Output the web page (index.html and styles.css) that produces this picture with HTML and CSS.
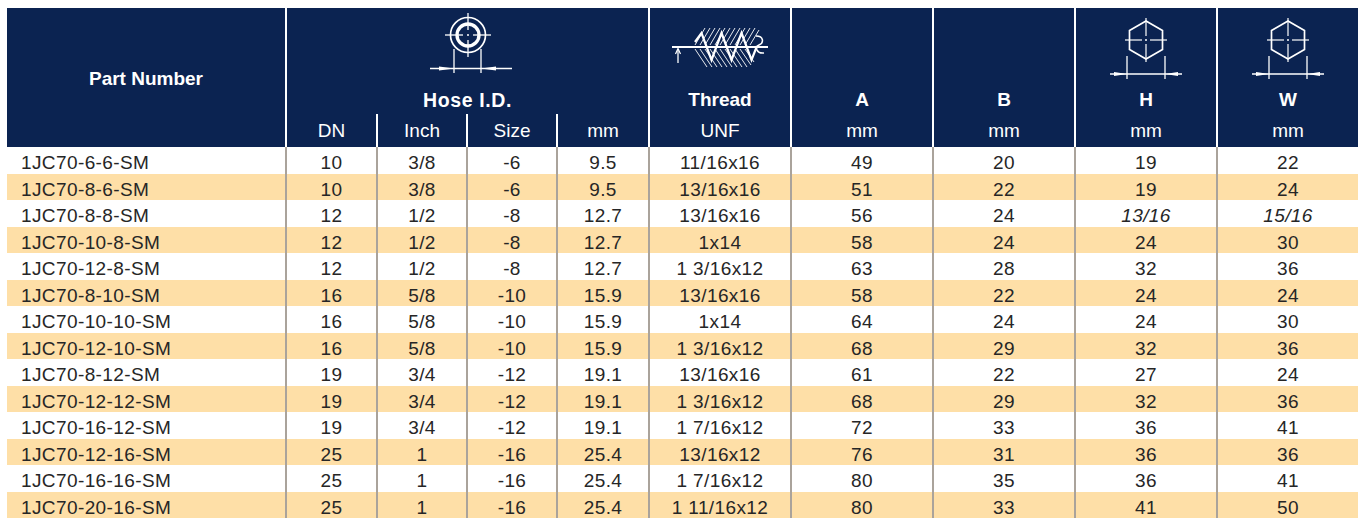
FILE: index.html
```html
<!DOCTYPE html>
<html lang="en">
<head>
<meta charset="utf-8">
<title>1JC70 SM fittings</title>
<link rel="stylesheet" href="styles.css">
</head>
<body>
<div class="page">
<table class="spec">
  <colgroup>
    <col class="c-pn"><col class="c-dn"><col class="c-in"><col class="c-sz"><col class="c-mm">
    <col class="c-w"><col class="c-w"><col class="c-w"><col class="c-w"><col class="c-wl">
  </colgroup>
  <thead>
    <tr class="h-top">
      <th rowspan="2" class="pn-head">Part Number</th>
      <th colspan="4" class="top">
        <div class="icon-box">
          <svg class="icon" width="100" height="80" viewBox="0 0 100 80" fill="none" stroke="#fff">
            <circle cx="50" cy="26" r="17.5" stroke-width="1.7"/>
            <circle cx="50" cy="26" r="11" stroke-width="3.3"/>
            <line x1="27" y1="26" x2="45" y2="26" stroke-width="1.3"/>
            <line x1="55" y1="26" x2="73" y2="26" stroke-width="1.3"/>
            <line x1="50" y1="4" x2="50" y2="21" stroke-width="1.3"/>
            <line x1="50" y1="31" x2="50" y2="48" stroke-width="1.3"/>
            <circle cx="50" cy="26" r="1" fill="#fff" stroke="none"/>
            <line x1="36" y1="40" x2="36" y2="64" stroke-width="1.3"/>
            <line x1="63" y1="40" x2="63" y2="64" stroke-width="1.3"/>
            <line x1="12" y1="59.5" x2="94" y2="59.5" stroke-width="1.3"/>
            <polygon points="21,57.6 36,59.5 21,61.4" fill="#fff" stroke="none"/>
            <polygon points="78,57.6 63,59.5 78,61.4" fill="#fff" stroke="none"/>
          </svg>
        </div>
        <div class="lbl lbl-wide">Hose I.D.</div>
      </th>
      <th class="top">
        <div class="icon-box">
          <svg class="icon" width="110" height="80" viewBox="0 0 110 80" fill="none" stroke="#fff">
            <g stroke-width="0.9">
              <line x1="30" y1="36" x2="40" y2="19"/>
              <line x1="35" y1="36" x2="45" y2="19"/>
              <line x1="40" y1="36" x2="50" y2="19"/>
              <line x1="45" y1="36" x2="55" y2="19"/>
              <line x1="50" y1="36" x2="60" y2="19"/>
              <line x1="55" y1="36" x2="65" y2="19"/>
              <line x1="60" y1="36" x2="70" y2="19"/>
              <line x1="65" y1="36" x2="75" y2="19"/>
              <line x1="70" y1="36" x2="80" y2="19"/>
              <line x1="75" y1="36" x2="85" y2="19"/>
              <line x1="80" y1="36" x2="90" y2="19"/>
              <line x1="85" y1="36" x2="94" y2="21"/>
              <line x1="30" y1="40" x2="42" y2="58"/>
              <line x1="35" y1="40" x2="47" y2="58"/>
              <line x1="40" y1="40" x2="52" y2="58"/>
              <line x1="45" y1="40" x2="57" y2="58"/>
              <line x1="50" y1="40" x2="62" y2="58"/>
              <line x1="55" y1="40" x2="67" y2="58"/>
              <line x1="60" y1="40" x2="72" y2="58"/>
              <line x1="65" y1="40" x2="77" y2="58"/>
              <line x1="70" y1="40" x2="82" y2="58"/>
              <line x1="75" y1="40" x2="86" y2="56"/>
              <line x1="80" y1="40" x2="89" y2="53"/>
            </g>
            <polyline points="30,33 36.5,24 46.5,51 56.5,24 66.5,51 76.5,24 86.5,51 92,37" stroke-width="2.2"/>
            <path d="M91 27 C 99 27, 99 34, 94 36 C 89 38, 92 45, 99 44" stroke-width="1.5"/>
            <line x1="7" y1="38" x2="103" y2="38" stroke-width="1.8"/>
            <line x1="13" y1="40" x2="13" y2="54" stroke-width="1.3"/>
            <polyline points="10.5,45 13,39.5 15.5,45" stroke-width="1.2"/>
          </svg>
        </div>
        <div class="lbl">Thread</div>
      </th>
      <th class="top"><div class="icon-box"></div><div class="lbl">A</div></th>
      <th class="top"><div class="icon-box"></div><div class="lbl">B</div></th>
      <th class="top">
        <div class="icon-box">
          <svg class="icon" width="80" height="80" viewBox="0 0 80 80" fill="none" stroke="#fff">
            <polygon points="40,12 56.5,21.5 56.5,40.5 40,50 23.5,40.5 23.5,21.5" stroke-width="1.7"/>
            <line x1="19" y1="31" x2="36" y2="31" stroke-width="1.2"/>
            <line x1="44" y1="31" x2="61" y2="31" stroke-width="1.2"/>
            <line x1="40" y1="9" x2="40" y2="27" stroke-width="1.2"/>
            <line x1="40" y1="35" x2="40" y2="53" stroke-width="1.2"/>
            <circle cx="40" cy="31" r="1" fill="#fff" stroke="none"/>
            <line x1="21" y1="47" x2="21" y2="70" stroke-width="1.3"/>
            <line x1="59" y1="47" x2="59" y2="70" stroke-width="1.3"/>
            <line x1="4" y1="65" x2="76" y2="65" stroke-width="1.3"/>
            <polygon points="8,63.1 21,65 8,66.9" fill="#fff" stroke="none"/>
            <polygon points="72,63.1 59,65 72,66.9" fill="#fff" stroke="none"/>
          </svg>
        </div>
        <div class="lbl">H</div>
      </th>
      <th class="top">
        <div class="icon-box">
          <svg class="icon" width="80" height="80" viewBox="0 0 80 80" fill="none" stroke="#fff">
            <polygon points="40,12 56.5,21.5 56.5,40.5 40,50 23.5,40.5 23.5,21.5" stroke-width="1.7"/>
            <line x1="19" y1="31" x2="36" y2="31" stroke-width="1.2"/>
            <line x1="44" y1="31" x2="61" y2="31" stroke-width="1.2"/>
            <line x1="40" y1="9" x2="40" y2="27" stroke-width="1.2"/>
            <line x1="40" y1="35" x2="40" y2="53" stroke-width="1.2"/>
            <circle cx="40" cy="31" r="1" fill="#fff" stroke="none"/>
            <line x1="21" y1="47" x2="21" y2="70" stroke-width="1.3"/>
            <line x1="59" y1="47" x2="59" y2="70" stroke-width="1.3"/>
            <line x1="4" y1="65" x2="76" y2="65" stroke-width="1.3"/>
            <polygon points="8,63.1 21,65 8,66.9" fill="#fff" stroke="none"/>
            <polygon points="72,63.1 59,65 72,66.9" fill="#fff" stroke="none"/>
          </svg>
        </div>
        <div class="lbl">W</div>
      </th>
    </tr>
    <tr class="h-sub">
      <th>DN</th><th>Inch</th><th>Size</th><th>mm</th><th>UNF</th><th>mm</th><th>mm</th><th>mm</th><th>mm</th>
    </tr>
  </thead>
  <tbody>
    <tr><td class="pn">1JC70-6-6-SM</td><td>10</td><td>3/8</td><td>-6</td><td>9.5</td><td>11/16x16</td><td>49</td><td>20</td><td>19</td><td>22</td></tr>
    <tr><td class="pn">1JC70-8-6-SM</td><td>10</td><td>3/8</td><td>-6</td><td>9.5</td><td>13/16x16</td><td>51</td><td>22</td><td>19</td><td>24</td></tr>
    <tr><td class="pn">1JC70-8-8-SM</td><td>12</td><td>1/2</td><td>-8</td><td>12.7</td><td>13/16x16</td><td>56</td><td>24</td><td class="it">13/16</td><td class="it">15/16</td></tr>
    <tr><td class="pn">1JC70-10-8-SM</td><td>12</td><td>1/2</td><td>-8</td><td>12.7</td><td>1x14</td><td>58</td><td>24</td><td>24</td><td>30</td></tr>
    <tr><td class="pn">1JC70-12-8-SM</td><td>12</td><td>1/2</td><td>-8</td><td>12.7</td><td>1 3/16x12</td><td>63</td><td>28</td><td>32</td><td>36</td></tr>
    <tr><td class="pn">1JC70-8-10-SM</td><td>16</td><td>5/8</td><td>-10</td><td>15.9</td><td>13/16x16</td><td>58</td><td>22</td><td>24</td><td>24</td></tr>
    <tr><td class="pn">1JC70-10-10-SM</td><td>16</td><td>5/8</td><td>-10</td><td>15.9</td><td>1x14</td><td>64</td><td>24</td><td>24</td><td>30</td></tr>
    <tr><td class="pn">1JC70-12-10-SM</td><td>16</td><td>5/8</td><td>-10</td><td>15.9</td><td>1 3/16x12</td><td>68</td><td>29</td><td>32</td><td>36</td></tr>
    <tr><td class="pn">1JC70-8-12-SM</td><td>19</td><td>3/4</td><td>-12</td><td>19.1</td><td>13/16x16</td><td>61</td><td>22</td><td>27</td><td>24</td></tr>
    <tr><td class="pn">1JC70-12-12-SM</td><td>19</td><td>3/4</td><td>-12</td><td>19.1</td><td>1 3/16x12</td><td>68</td><td>29</td><td>32</td><td>36</td></tr>
    <tr><td class="pn">1JC70-16-12-SM</td><td>19</td><td>3/4</td><td>-12</td><td>19.1</td><td>1 7/16x12</td><td>72</td><td>33</td><td>36</td><td>41</td></tr>
    <tr><td class="pn">1JC70-12-16-SM</td><td>25</td><td>1</td><td>-16</td><td>25.4</td><td>13/16x12</td><td>76</td><td>31</td><td>36</td><td>36</td></tr>
    <tr><td class="pn">1JC70-16-16-SM</td><td>25</td><td>1</td><td>-16</td><td>25.4</td><td>1 7/16x12</td><td>80</td><td>35</td><td>36</td><td>41</td></tr>
    <tr><td class="pn">1JC70-20-16-SM</td><td>25</td><td>1</td><td>-16</td><td>25.4</td><td>1 11/16x12</td><td>80</td><td>33</td><td>41</td><td>50</td></tr>
  </tbody>
</table>
</div>
</body>
</html>
```

FILE: styles.css
```css
html, body {
  margin: 0;
  padding: 0;
  background: #ffffff;
}

.page {
  padding: 8px 0 0 7px;
}

.spec {
  border-collapse: collapse;
  table-layout: fixed;
  width: 1351px;
  font-family: "Liberation Sans", Arial, sans-serif;
  font-size: 19px;
}

.c-pn { width: 279px; }
.c-dn { width: 91px; }
.c-in { width: 90px; }
.c-sz { width: 90px; }
.c-mm { width: 92px; }
.c-w  { width: 142px; }
.c-wl { width: 141px; }

.spec thead th {
  background: #0b2351;
  color: #ffffff;
  padding: 0;
  text-align: center;
  font-weight: 400;
  border-left: 2px solid #ffffff;
}

.spec thead th.pn-head {
  border-left: none;
  font-weight: 700;
  vertical-align: middle;
  padding-top: 2px;
}

.h-top th {
  height: 106px;
  vertical-align: top;
}

.icon-box {
  height: 81px;
  display: flex;
  justify-content: center;
  align-items: flex-start;
  padding-top: 1px;
  box-sizing: border-box;
}

.icon {
  display: block;
  flex: none;
}

.lbl {
  height: 22px;
  line-height: 22px;
  font-weight: 700;
}

.lbl-wide {
  letter-spacing: 0.6px;
  font-size: 19.5px;
}

.h-sub th {
  height: 33px;
  line-height: 33px;
  vertical-align: middle;
  padding-top: 1px;
}

.spec tbody td {
  box-sizing: border-box;
  height: 26.5px;
  padding: 6px 0 0;
  line-height: 20px;
  text-align: center;
  vertical-align: top;
  color: #262626;
  letter-spacing: 0.4px;
  border-left: 2px solid #aaa39b;
}

.spec tbody td.pn {
  text-align: left;
  padding-left: 14px;
  border-left: none;
}

.spec tbody td.it {
  font-style: italic;
}

.spec tbody tr:nth-child(even) td {
  background: #fedfa7;
}
```
